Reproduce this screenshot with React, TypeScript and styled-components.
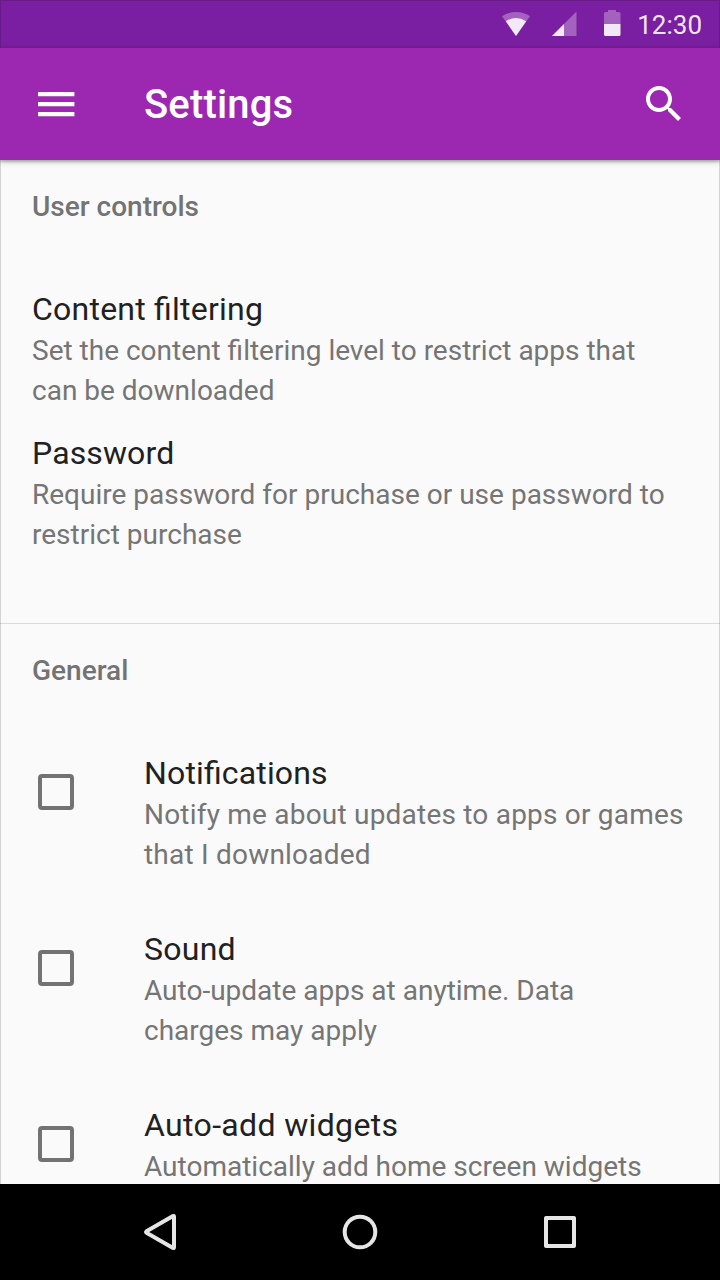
import React from "react";
import styled, { createGlobalStyle } from "styled-components";

const GlobalStyle = createGlobalStyle`
  *, *::before, *::after { box-sizing: border-box; }
  body { margin: 0; background: #fafafa; }
`;

const Screen = styled.div`
  position: relative;
  display: flex;
  flex-direction: column;
  width: 720px;
  height: 1280px;
  overflow: hidden;
  background: #fafafa;
  font-family: Roboto, "Liberation Sans", sans-serif;
  font-feature-settings: "liga" 1;

  &::after {
    content: "";
    position: absolute;
    inset: 0;
    border: 1px solid rgba(0, 0, 0, 0.15);
    pointer-events: none;
  }
`;

const StatusBar = styled.header`
  display: flex;
  flex: none;
  align-items: center;
  justify-content: flex-end;
  height: 48px;
  padding-right: 18px;
  background: #7b1fa2;
`;

const StatusIcons = styled.svg`
  flex: none;
  margin-right: 13px;
`;

const Clock = styled.time`
  padding-top: 2px;
  color: rgba(255, 255, 255, 0.9);
  font-size: 26px;
  line-height: 46px;
`;

const AppBar = styled.div`
  display: flex;
  flex: none;
  align-items: center;
  z-index: 1;
  height: 112px;
  padding: 0 32px;
  background: #9c27b0;
  box-shadow: 0 1px 6px rgba(0, 0, 0, 0.3), 0 2px 2px rgba(0, 0, 0, 0.16);
`;

const AppTitle = styled.h1`
  flex: 1;
  margin: 0 0 0 64px;
  padding-top: 2px;
  color: #fff;
  font-size: 40px;
  font-weight: 500;
  letter-spacing: 0.15px;
  line-height: 48px;
`;

const IconButton = styled.button`
  display: flex;
  flex: none;
  width: 48px;
  height: 48px;
  padding: 0;
  border: 0;
  background: none;
`;

const Content = styled.main`
  flex: 1;
  min-height: 0;
  overflow: hidden;
`;

const Section = styled.section<{ $divided?: boolean }>`
  height: ${(p) => (p.$divided ? "464px" : "auto")};
  padding: 27px 32px 0;
  border-bottom: ${(p) => (p.$divided ? "1px solid #dadada" : "0")};
`;

const SectionTitle = styled.h2`
  margin: 0 0 62px;
  color: #737373;
  font-size: 28px;
  font-weight: 500;
  line-height: 40px;
`;

const List = styled.div<{ $gap: number }>`
  display: flex;
  flex-direction: column;
  gap: ${(p) => p.$gap}px;
`;

const Row = styled.div`
  display: flex;
  height: 122px;
`;

const CheckSlot = styled.div`
  flex: none;
  width: 112px;
  padding: 21px 0 0 6px;
`;

const Checkbox = styled.div`
  width: 36px;
  height: 36px;
  border: 4px solid #737373;
  border-radius: 4px;
`;

const RowTitle = styled.div<{ $tracking: number }>`
  margin-bottom: 2px;
  color: #212121;
  font-size: 32px;
  letter-spacing: ${(p) => p.$tracking}px;
  line-height: 40px;
  white-space: nowrap;
`;

const Description = styled.div<{ $tracking: number }>`
  color: #757575;
  font-size: 28px;
  letter-spacing: ${(p) => p.$tracking}px;
  line-height: 40px;
  white-space: nowrap;
`;

const NavBar = styled.nav`
  display: flex;
  flex: none;
  align-items: center;
  justify-content: center;
  gap: 152px;
  height: 96px;
  background: #000;
`;

interface Setting {
  title: string;
  lines: string[];
  titleTracking?: number;
  tracking?: number;
}

const controls: Setting[] = [
  {
    title: "Content filtering",
    lines: ["Set the content filtering level to restrict apps that", "can be downloaded"],
    titleTracking: 0.23,
  },
  {
    title: "Password",
    lines: ["Require password for pruchase or use password to", "restrict purchase"],
    titleTracking: 0.12,
    tracking: 0.01,
  },
];

const general: Setting[] = [
  {
    title: "Notifications",
    lines: ["Notify me about updates to apps or games", "that I downloaded"],
    titleTracking: 0.15,
    tracking: 0.21,
  },
  { title: "Sound", lines: ["Auto-update apps at anytime. Data", "charges may apply"], titleTracking: 0.25 },
  { title: "Auto-add widgets", lines: ["Automatically add home screen widgets"], titleTracking: 0.35 },
];

function SettingText({ title, lines, titleTracking = 0, tracking = 0 }: Setting) {
  return (
    <div>
      <RowTitle $tracking={titleTracking}>{title}</RowTitle>
      {lines.map((line) => (
        <Description key={line} $tracking={tracking}>
          {line}
        </Description>
      ))}
    </div>
  );
}

export default function App() {
  return (
    <>
      <GlobalStyle />
      <Screen>
        <StatusBar>
          <StatusIcons width="124" height="48" viewBox="500 0 124 48" fill="#fff">
            <path d="M502 16.2Q516 7.8 530 16.2L516 36Z" opacity=".3" />
            <path d="M505.8 21.3Q516 14.5 526.2 21.3L516 36Z" opacity=".86" />
            <path d="M552 36L576.5 11.5V36Z" opacity=".3" />
            <path d="M552 36L564 24V36Z" opacity=".86" />
            <path d="M604 24V13.5Q604 12 605.5 12H608V10H616V12H619Q620.5 12 620.5 13.5V24Z" opacity=".3" />
            <path d="M604 24H620.5V34.5Q620.5 36 619 36H605.5Q604 36 604 34.5Z" opacity=".9" />
          </StatusIcons>
          <Clock>12:30</Clock>
        </StatusBar>
        <AppBar>
          <IconButton aria-label="Menu">
            <svg width="48" height="48" viewBox="0 0 48 48" fill="#fff">
              <path d="M6 12h36.4v4.2H6zM6 22h36.4v4.2H6zM6 32h36.4v4.2H6z" />
            </svg>
          </IconButton>
          <AppTitle>Settings</AppTitle>
          <IconButton aria-label="Search">
            <svg width="48" height="48" viewBox="0 0 48 48" fill="#fff">
              <path d="M31 28h-1.59l-.55-.55C30.82 25.18 32 22.23 32 19c0-7.18-5.82-13-13-13S6 11.82 6 19s5.82 13 13 13c3.23 0 6.18-1.18 8.45-3.13l.55.55V31l10 9.98L40.98 38 31 28zm-12 0c-4.97 0-9-4.03-9-9s4.03-9 9-9 9 4.03 9 9-4.03 9-9 9z" />
            </svg>
          </IconButton>
        </AppBar>
        <Content>
          <Section $divided>
            <SectionTitle>User controls</SectionTitle>
            <List $gap={22}>
              {controls.map((item) => (
                <Row key={item.title}>
                  <SettingText {...item} />
                </Row>
              ))}
            </List>
          </Section>
          <Section>
            <SectionTitle>General</SectionTitle>
            <List $gap={54}>
              {general.map((item) => (
                <Row key={item.title}>
                  <CheckSlot>
                    <Checkbox role="checkbox" aria-checked="false" aria-label={item.title} />
                  </CheckSlot>
                  <SettingText {...item} />
                </Row>
              ))}
            </List>
          </Section>
        </Content>
        <NavBar>
          <svg width="48" height="48" viewBox="0 0 48 48" fill="none" stroke="#e6e6e6" strokeWidth="4" strokeLinejoin="round">
            <path d="M38 8.5Q38 7.6 37 8.1L10.5 23.3Q9.8 24 10.5 24.7L37 39.9Q38 40.4 38 39.5Z" />
          </svg>
          <svg width="48" height="48" viewBox="0 0 48 48" fill="none" stroke="#e6e6e6" strokeWidth="4">
            <circle cx="24" cy="24" r="15.3" />
          </svg>
          <svg width="48" height="48" viewBox="0 0 48 48" fill="none" stroke="#e6e6e6" strokeWidth="4" strokeLinejoin="round">
            <path d="M10 10H38V38H10Z" />
          </svg>
        </NavBar>
      </Screen>
    </>
  );
}
